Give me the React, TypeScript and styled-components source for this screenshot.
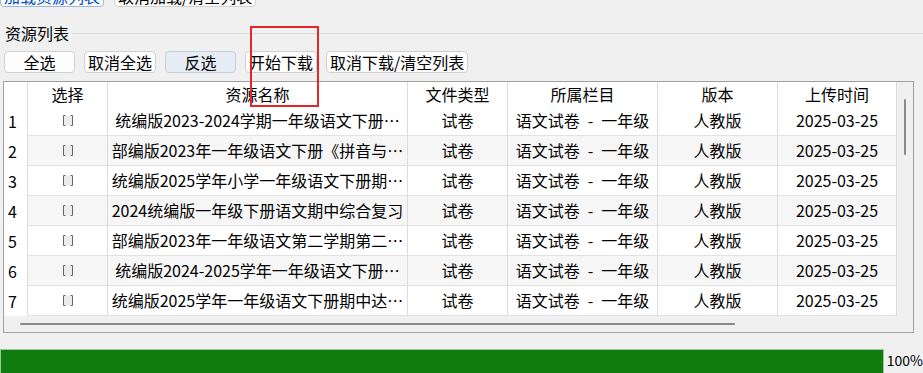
import React from 'react'
import styled, { createGlobalStyle } from 'styled-components'

const GlobalStyle = createGlobalStyle`
  body {
    margin: 0;
    background: #f0f0f0;
    font-family: "Noto Sans CJK SC", "Microsoft YaHei", sans-serif;
    color: #000;
    overflow: hidden;
  }
`

const Window = styled.div`
  position: relative;
  width: 923px;
  height: 373px;
  overflow: hidden;
  display: flex;
  flex-direction: column;
`
const TopBar = styled.div`
  display: flex;
  gap: 10px;
  margin-top: -15px;
`
const Divider = styled.div`
  height: 1px;
  background: #d9d9d9;
  margin-top: 10px;
`
const GroupHeader = styled.div`
  display: flex;
  align-items: center;
  gap: 3px;
  height: 16px;
  margin-top: 8px;
  padding-left: 5px;
`
const GroupLabel = styled.span`
  font-size: 16px;
  line-height: 16px;
`
const GroupLine = styled.div`
  flex: 1;
  height: 1px;
  background: #d9d9d9;
`
const ButtonRow = styled.div`
  display: flex;
  gap: 9px;
  margin-top: 10px;
  padding-left: 4px;
`
const Button = styled.button<{ $active?: boolean; $primary?: boolean }>`
  box-sizing: border-box;
  min-width: 71px;
  height: 22px;
  padding: 0 3px;
  font-family: inherit;
  font-size: 16px;
  line-height: 20px;
  color: ${(p) => (p.$primary ? '#0050c0' : '#000')};
  background: ${(p) => (p.$active ? '#e6edf5' : '#fdfdfd')};
  border: 1px solid ${(p) => (p.$active ? '#c5cfdb' : p.$primary ? '#9ab6d8' : '#d0d0d0')};
  border-radius: 4px;
  white-space: nowrap;
`
const Frame = styled.div`
  box-sizing: border-box;
  margin: 8px 0 0 3px;
  width: 911px;
  height: 252px;
  border: 1px solid #a0a0a0;
  display: grid;
  grid-template-columns: 893px 16px;
  grid-template-rows: 234px 16px;
`
const Table = styled.div`
  display: grid;
  grid-template-columns: 24px 80px 300px 100px 150px 120px 119px;
  grid-template-rows: 24px repeat(7, 30px);
  background: #fff;
  overflow: hidden;
`
const HeadCell = styled.div`
  box-sizing: border-box;
  border-right: 1px solid #dcdcdc;
  font-size: 16px;
  line-height: 24px;
  text-align: center;
  white-space: nowrap;
`
const RowNum = styled.div`
  box-sizing: border-box;
  border-right: 1px solid #dcdcdc;
  padding-left: 4px;
  font-size: 16px;
  line-height: 30px;
  background: #fff;
`
const Cell = styled.div<{ $alt: boolean }>`
  box-sizing: border-box;
  border-right: 1px solid #dcdcdc;
  border-bottom: 1px solid #e2e2e2;
  background: ${(p) => (p.$alt ? '#f6f6f6' : '#fff')};
  font-size: 16px;
  line-height: 29px;
  text-align: center;
  white-space: pre;
  overflow: hidden;
  display: flex;
  align-items: center;
  justify-content: center;
`
const VScroll = styled.div`
  background: #f0f0f0;
  display: flex;
  justify-content: center;
  padding-top: 17px;
`
const VThumb = styled.div`
  width: 2px;
  height: 56px;
  background: #8a8a8a;
  border-radius: 1px;
`
const HScroll = styled.div`
  grid-column: 1 / 3;
  background: #f0f0f0;
  display: flex;
  align-items: center;
  padding-left: 16px;
`
const HThumb = styled.div`
  width: 715px;
  height: 2px;
  background: #8a8a8a;
  border-radius: 1px;
`
const StatusLine = styled.div`
  height: 1px;
  background: #e2e2e2;
  margin-top: 8px;
`
const StatusRow = styled.div`
  display: flex;
  align-items: center;
  margin-top: 8px;
  height: 26px;
`
const Progress = styled.div`
  box-sizing: border-box;
  width: 886px;
  height: 26px;
  background: #107c10;
  border: 1px solid #9cc89c;
`
const Percent = styled.span`
  margin-left: 3px;
  font-size: 14px;
  line-height: 26px;
  margin-top: -4px;
`
const Mark = styled.div`
  position: absolute;
  left: 250px;
  top: 26px;
  width: 69px;
  height: 81px;
  box-sizing: border-box;
  border: 2px solid #e32626;
  pointer-events: none;
`

const CheckBox = () => (
  <svg width="12" height="13" viewBox="0 0 12 13">
    <rect x="2" y="1.5" width="8" height="10" fill="#ececec" />
    <path d="M3.5 1.5H1.5V11.5H3.5M8.5 1.5H10.5V11.5H8.5" fill="none" stroke="#666" strokeWidth="1" />
  </svg>
)

const headers = ['选择', '资源名称', '文件类型', '所属栏目', '版本', '上传时间']

const rows = [
  '统编版2023-2024学期一年级语文下册…',
  '部编版2023年一年级语文下册《拼音与…',
  '统编版2025学年小学一年级语文下册期…',
  '2024统编版一年级下册语文期中综合复习',
  '部编版2023年一年级语文第二学期第二…',
  '统编版2024-2025学年一年级语文下册…',
  '统编版2025学年一年级语文下册期中达…',
]

export default function App() {
  return (
    <Window>
      <GlobalStyle />
      <TopBar>
        <Button $primary>加载资源列表</Button>
        <Button>取消加载/清空列表</Button>
      </TopBar>
      <Divider />
      <GroupHeader>
        <GroupLabel>资源列表</GroupLabel>
        <GroupLine />
      </GroupHeader>
      <ButtonRow>
        <Button>全选</Button>
        <Button>取消全选</Button>
        <Button $active>反选</Button>
        <Button>开始下载</Button>
        <Button>取消下载/清空列表</Button>
      </ButtonRow>
      <Frame>
        <Table>
          <HeadCell />
          {headers.map((h) => (
            <HeadCell key={h}>{h}</HeadCell>
          ))}
          {rows.map((name, i) => {
            const alt = i % 2 === 1
            return (
              <React.Fragment key={i}>
                <RowNum>{i + 1}</RowNum>
                <Cell $alt={alt}>
                  <CheckBox />
                </Cell>
                <Cell $alt={alt}>{name}</Cell>
                <Cell $alt={alt}>试卷</Cell>
                <Cell $alt={alt}>{'语文试卷\u2002-\u2002一年级'}</Cell>
                <Cell $alt={alt}>人教版</Cell>
                <Cell $alt={alt}>2025-03-25</Cell>
              </React.Fragment>
            )
          })}
        </Table>
        <VScroll>
          <VThumb />
        </VScroll>
        <HScroll>
          <HThumb />
        </HScroll>
      </Frame>
      <StatusLine />
      <StatusRow>
        <Progress />
        <Percent>100%</Percent>
      </StatusRow>
      <Mark />
    </Window>
  )
}
